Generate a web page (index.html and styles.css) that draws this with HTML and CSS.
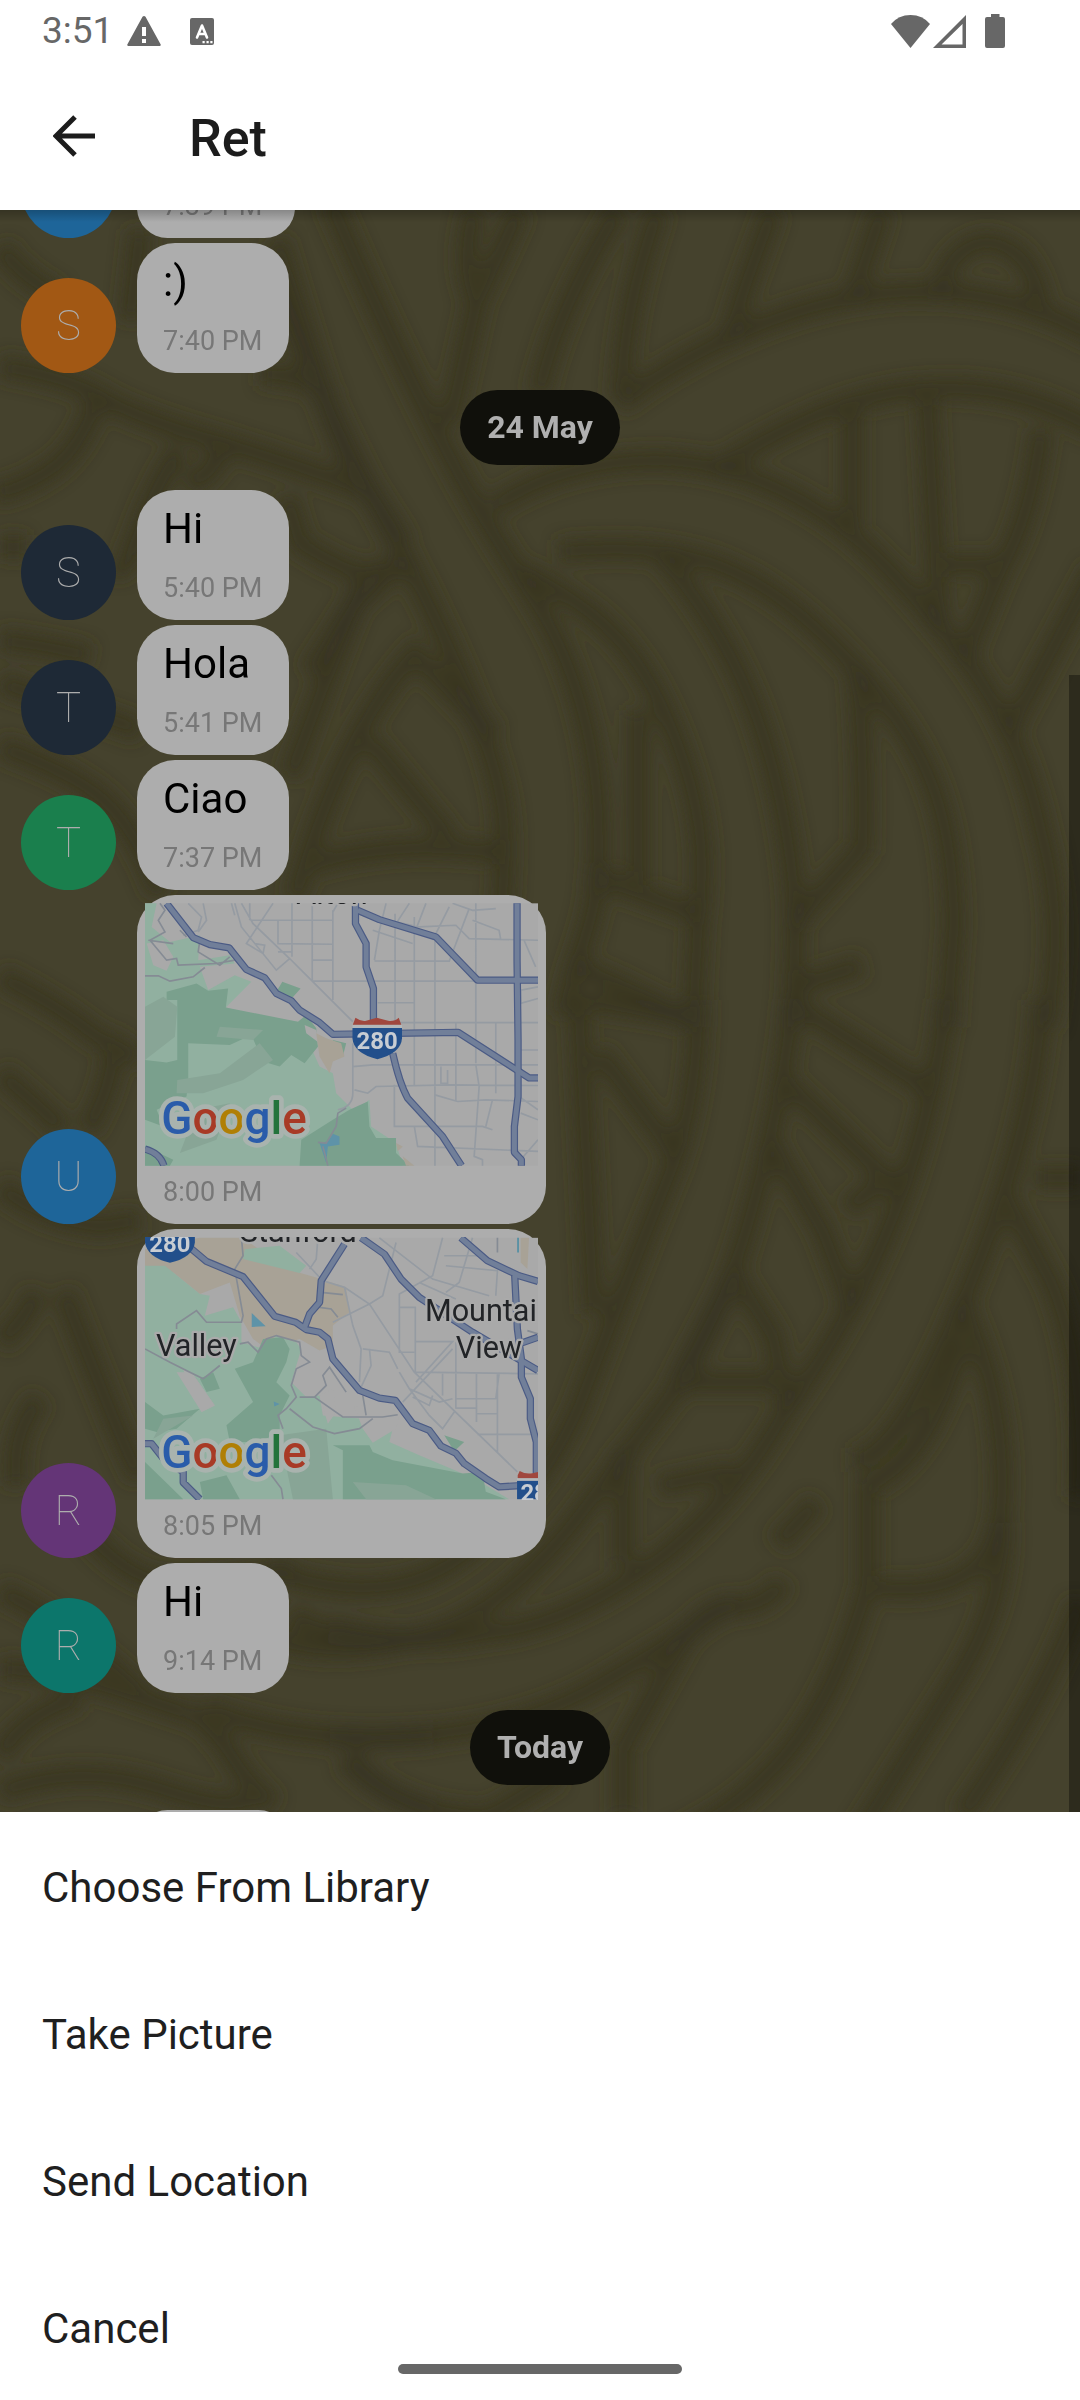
FILE: index.html
```html
<!DOCTYPE html>
<html lang="en">
<head>
<meta charset="utf-8">
<meta name="viewport" content="width=device-width, initial-scale=1">
<title>Ret</title>
<link rel="stylesheet" href="styles.css">
</head>
<body>
<div class="screen">
  <div class="status">
    <div class="status-group">
      <span class="clock">3:51</span>
      <svg class="icon-warn" viewBox="0 0 34 30" aria-hidden="true"><path d="M15.500.8Q17-.6 18.500.8L33.700 28.500Q34 30 32.500 30H1.500Q0 30 .3 28.500ZM15 11v9h4v-9ZM15 23v4h4v-4Z" fill-rule="evenodd"/></svg>
      <svg class="icon-lang" viewBox="0 0 24 27" aria-hidden="true"><rect width="24" height="27" rx="2"/><path d="M7 19.500 12 7.500l5 12M8.500 16h7" fill="none" stroke="#fff" stroke-width="2.600" stroke-linecap="round" stroke-linejoin="round"/><path d="M12.500 23h2.200v2.200h-2.200zM16.500 23h2.200v2.200h-2.200zM20.300 23h2.200v2.200h-2.200z" fill="#fff"/></svg>
    </div>
    <div class="status-group status-group--end">
      <svg class="icon-wifi" viewBox="0 0 39 33" aria-hidden="true"><path d="M0 9Q7.500 0 19.500 0T39 9L19.500 33Z"/></svg>
      <svg class="icon-signal" viewBox="0 0 33 33" aria-hidden="true"><path d="M33 0V33H0ZM29.500 9 8.500 29.500H29.500Z" fill-rule="evenodd"/></svg>
      <svg class="icon-battery" viewBox="0 0 20 34" aria-hidden="true"><path d="M6 0h8.500v3H18q2 0 2 2v27q0 2-2 2H2q-2 0-2-2V5q0-2 2-2h4Z"/></svg>
    </div>
  </div>
  <header class="appbar">
    <button class="back" type="button" aria-label="Back">
      <svg viewBox="0 0 42 42" aria-hidden="true"><path d="M42 21H4M22 2 3 21 22 40" fill="none" stroke="#1c1c1c" stroke-width="5"/></svg>
    </button>
    <h1>Ret</h1>
  </header>

  <main class="chat">
    <svg class="wallpaper" viewBox="0 0 1080 1602" preserveAspectRatio="xMidYMid slice" aria-hidden="true">
      <defs><filter id="soft" x="-5%" y="-5%" width="110%" height="110%"><feGaussianBlur stdDeviation="8"/></filter></defs>
      <g class="strands" filter="url(#soft)">
        <g transform="translate(300 -10) scale(.4975 .5102)">
          <path d="M60 0C160 230 230 370 310 520S470 770 510 850 600 1060 600 1250 560 1440 530 1600"/>
          <path d="M-60 150C20 330 90 480 150 590S290 840 350 1000 420 1200 405 1400"/>
          <path d="M350 20Q320 130 355 200L300 440M440 20Q400 110 355 200M640 20C540 180 500 290 480 380M720 20C670 160 650 260 645 390M950 20C910 130 880 200 865 275M1170 20Q1140 110 1110 195"/>
          <path d="M640 400C760 310 1000 180 1250 180Q1440 180 1600 270M840 525C980 440 1120 375 1270 370Q1440 360 1600 450"/>
          <path d="M390 600C500 530 620 510 720 510Q980 520 1180 720C1330 880 1440 1000 1490 1240Q1540 1420 1500 1620"/>
          <path d="M520 690C760 670 900 700 1080 880S1310 1180 1315 1420L1300 1620"/>
          <path d="M450 730C600 800 680 880 740 1020S820 1270 800 1420L790 1620"/>
          <path d="M730 700C860 850 930 1000 970 1200S990 1460 990 1620"/>
          <path d="M1285 190C1290 120 1350 70 1400 85S1470 130 1490 200"/>
          <path d="M1110 410V640M1260 380L1285 840M1490 450Q1470 620 1410 720L1335 900M1290 715H1410M1600 720L1425 1040"/>
          <path d="M1120 920Q1135 1100 1130 1270L990 1420M680 1000V1350L580 1320M600 1330L800 1400M550 1500Q680 1550 780 1610"/>
          <path d="M-20 1130L110 790 220 700M-10 1370Q80 1050 230 890L390 1050M140 1060L300 1250M0 1310Q180 1250 400 1280"/>
          <path d="M1000 1540L1130 1500"/>
        </g>
        <g transform="translate(300 790) scale(.4975 .523)">
          <path d="M800 0Q800 200 740 340T560 780Q480 950 330 1060T-60 1090"/>
          <path d="M990 0Q970 200 900 430T710 800L550 1000Q400 1180 230 1220T-60 1220"/>
          <path d="M1300 0Q1270 230 1190 420T980 780Q860 980 690 1090T380 1210Q230 1240 60 1200"/>
          <path d="M1490 0Q1480 240 1340 560T1110 880M1420 380L1510 540Q1580 700 1568 950"/>
          <path d="M1330 580Q1420 760 1410 960T1130 1120M1330 650Q1270 880 1140 930V1120Q1080 1330 970 1450T700 1620"/>
          <path d="M1410 1000Q1420 1150 1320 1300T1120 1600M1568 1150Q1500 1330 1330 1560"/>
          <path d="M560 0L590 600M600 100L750 290M770 30L560 0M980 160L1200 360M980 0L1260 170M950 280L1050 440 1110 590M870 520L950 640 980 780M760 730H980M870 530L760 730M1100 400L1180 340"/>
          <path d="M720 930L870 900M960 1040L1040 960M970 1110Q940 1160 870 1160T750 1260L650 1430V1560"/>
          <path d="M60 1410Q400 1420 600 1310T870 1150M90 1450Q200 1560 380 1560L520 1480M650 860V1080M1480 340H1568"/>
        </g>
        <g transform="scale(.3333)">
          <path d="M0 110Q60 200 180 260M420 60L390 330M0 470Q200 500 300 560T640 690 1120 850M780 490Q960 500 980 560M830 90Q880 260 960 520T1120 860L1210 1000"/>
          <path d="M290 570Q240 720 150 780T-20 850M540 720Q470 820 420 960T340 1060M660 720Q640 800 560 820M860 860L900 1000Q1060 1100 1110 1090L1060 1190 930 1390"/>
          <path d="M0 1010H80M0 1290Q160 1310 270 1340M0 1420Q200 1480 420 1560"/>
        </g>
        <g transform="translate(0 510) scale(.3333)">
          <path d="M0 80Q200 150 300 230T480 520M0 770Q160 850 250 920T420 1010M0 1060Q120 1160 190 1230M330 940Q360 1060 260 1230M0 1400Q120 1500 300 1520L420 1500"/>
        </g>
        <g transform="translate(0 1082) scale(.3333)">
          <path d="M0 150Q80 80 110 0M190 0Q260 180 320 330T420 560M120 320Q30 430 50 580M0 900Q160 960 420 1200M240 690Q320 800 420 850T880 830M0 1130Q200 1140 430 1220T580 1260Q660 1330 700 1400T820 1540M0 1390Q80 1260 240 1220M0 1500Q240 1410 480 1490T760 1510M620 1250Q900 1360 1300 1330M1050 1390Q1120 1500 1300 1560M870 970Q1050 1070 1240 1040"/>
        </g>
      </g>
    </svg>

    <div class="list">
      <div class="row row--cut-top">
        <span class="avatar blue"></span>
        <article class="bubble bubble--wide"><time>7:39 PM</time></article>
      </div>
      <div class="row">
        <span class="avatar orange">S</span>
        <article class="bubble"><p>:)</p><time>7:40 PM</time></article>
      </div>
      <h2 class="day">24 May</h2>
      <div class="row">
        <span class="avatar navy">S</span>
        <article class="bubble"><p>Hi</p><time>5:40 PM</time></article>
      </div>
      <div class="row">
        <span class="avatar navy">T</span>
        <article class="bubble"><p>Hola</p><time>5:41 PM</time></article>
      </div>
      <div class="row">
        <span class="avatar green">T</span>
        <article class="bubble"><p>Ciao</p><time>7:37 PM</time></article>
      </div>
      <div class="row">
        <span class="avatar blue">U</span>
        <article class="bubble bubble--map">
          <svg class="map" viewBox="75 69 1182 789" role="img" aria-label="Map of shared location">
            <rect x="75" y="69" width="1182" height="789" fill="#a9a9a9"/>
            <path class="park-light" d="M75 69H110L95 140 150 185 240 165 235 240 330 225 345 250 240 260 265 330 345 285 395 305 318 382 430 410 535 425 560 470 600 560 640 580 650 640 705 695 750 660 755 740 830 790 850 858H75Z"/>
            <path class="park" d="M140 335L230 310 265 332 325 325 318 382 535 425 560 405 590 445 595 500 555 550 515 525 480 560 430 545 395 465 330 495 205 490V600L200 650 110 690 130 740 75 720V540L140 548 172 540V360H140ZM488 305L543 325 510 362 470 335ZM545 780L640 720 690 690 745 665 750 740 770 775 830 775V820L870 858H540ZM640 480L680 490 670 530 640 510ZM75 800L160 840 150 858H75Z"/>
            <path class="park-mid" d="M172 600L300 580 420 490 460 540 370 600 250 640 170 640ZM300 440L430 450 400 480 290 470ZM75 380L130 350 172 380 165 470 75 540ZM230 690L330 670 290 780 180 820Z"/>
            <path fill="#a9a9a9" d="M80 190L130 180 160 230 140 272 100 255ZM555 435L590 450 600 490 560 460Z"/>
            <path class="sand" d="M590 460L620 475 665 490 675 530 640 545 630 580 600 530ZM830 790L850 800 835 815ZM850 830L885 858H860Z"/>
            <path fill="#5e93a8" d="M600 790L625 785 640 762 660 770V795L625 800 620 850 610 820Z"/>
            <g class="streets">
              <path d="M365 69L400 130 510 235 700 425M390 69V120M517 69V230M578 69V300M640 90V360M395 120H640M475 120V190L640 192M475 215H515M578 240H638M460 69L380 190 430 220 435 195 405 190M345 69L365 140 470 270 510 235M580 303H1257M655 69L640 95M765 240L780 150 800 69M827 100V430M765 242L990 243 1050 85M885 110V620M947 160V858M1070 69V550M1130 430V640M775 368H885M830 428H1257M700 490V640Q700 680 655 690M700 560L760 555H1257M705 630L745 640 770 620 990 615 1257 617M825 615V740H1090L1120 750M885 740L895 800 1257 815M1010 430V665M947 645L1015 665 1100 660 1257 665M1070 555L1080 620 1065 830 1090 840V858M1120 660L1100 740M965 560V610H985V570M760 150L880 190M870 69L830 130M920 69L885 160M990 80L940 180M765 110L900 140 1010 135 1050 175 1257 180M1000 69L1060 90 1130 85M1060 120L1140 150 1145 178M1215 180L1250 260M1257 320L1205 330V370L1257 355M1197 510H1257M1205 700L1257 720M1257 780L1205 840M1200 650L1257 690M335 69L345 105M250 69L260 120 235 155M205 69L245 110 235 150 190 165"/>
            </g>
            <path class="trails" d="M120 69L135 90 115 120 135 155 90 180 140 240 170 235 175 255 290 250 345 240M85 180L160 190M240 180L235 215 300 255 330 230M75 287H115L150 303 220 290 255 262M180 150L200 170M680 685L655 700 650 740 620 790 595 788M610 800L625 858"/>
            <g class="highway">
              <path d="M140 69L220 172 270 193 328 203 380 268 435 293 470 340 515 362 540 390 600 428 640 463 1017 457 1230 594H1257"/>
              <path d="M708 69V130L740 190V260L762 325V420M715 90L780 118 950 170 1075 300H1257M820 520Q840 610 865 655L970 770 1027 858M1194 69V240L1197 480V650L1186 740V818L1207 840V858M75 808Q120 820 132 858"/>
            </g>
            <g class="highway-fill">
              <path d="M140 69L220 172 270 193 328 203 380 268 435 293 470 340 515 362 540 390 600 428 640 463 1017 457 1230 594H1257"/>
              <path d="M708 69V130L740 190V260L762 325V420M715 90L780 118 950 170 1075 300H1257M820 520Q840 610 865 655L970 770 1027 858M1194 69V240L1197 480V650L1186 740V818L1207 840V858M75 808Q120 820 132 858"/>
            </g>
            <text class="place" x="530" y="72">Alton</text>
            <path fill="#b4b8ba" d="M699 434H848V446H699Z"/>
            <path fill="#a0473e" d="M700 434L708 413Q725 425 740 422L772 413 806 422Q825 425 838 413L846 434Z"/>
            <path fill="#224f8b" d="M699 444H848V475Q845 520 774 538 702 520 699 475Z"/>
            <text class="shield" x="773" y="507">280</text>
            <text class="logo" x="124" y="764"><tspan class="g-blue">G</tspan><tspan class="g-red">o</tspan><tspan class="g-yellow">o</tspan><tspan class="g-blue">g</tspan><tspan class="g-green">l</tspan><tspan class="g-red">e</tspan></text>
          </svg>
          <time>8:00 PM</time>
        </article>
      </div>
      <div class="row">
        <span class="avatar purple">R</span>
        <article class="bubble bubble--map">
          <svg class="map" viewBox="75 66 1182 786" role="img" aria-label="Map of shared location">
            <rect x="75" y="66" width="1182" height="786" fill="#a9a9a9"/>
            <path class="sand" d="M75 100L240 66H370L500 160 590 185 680 215 690 290 640 330 640 390 600 405 540 370 440 400 400 370 360 300 330 200 240 235 160 170 75 150ZM1205 66H1230L1225 160 1205 140Z"/>
            <path class="park-light" d="M75 150L135 150 240 235 270 240 255 300 340 275 365 320 365 380 430 400 470 360 530 380 545 400 515 500 560 545 600 540 610 600 730 610 760 580 830 600 810 680 900 720 1030 775 1100 810 1170 852H75V330L170 320 180 440 245 590 285 570 215 470 160 450 120 410 75 430Z"/>
            <path class="park-light" d="M375 100L480 90 560 150 540 172 370 130Z"/>
            <path class="park" d="M240 490L280 470 300 520 260 530ZM345 460L400 440 430 370 490 365 510 400 500 440 470 500 510 540 480 600 480 650 420 680 330 680 320 630 400 560ZM640 690H750L760 710 820 735 1030 775 1090 770 1100 830 1160 852H670V705ZM75 560L130 600 240 580 170 640 110 650 75 640ZM75 740L190 852H75ZM975 660L1035 680 1005 708ZM240 800L320 780 360 852H250Z"/>
            <path class="park-mid" d="M480 660L620 640 640 852H520ZM130 610L220 600 100 670ZM700 800L860 810 950 852H740Z"/>
            <path fill="#a9a9a9" d="M170 470L215 470 285 570 245 590ZM600 540L640 520 650 590 625 625ZM705 575L800 560 840 600 830 640 760 682 730 640Z"/>
            <path fill="#5e93a8" d="M396 292L438 332 396 334ZM462 558L480 566 464 573Z"/>
            <g class="streets">
              <path d="M595 66L590 130 570 160M530 110L610 195 675 215 750 265 885 470 1195 770M675 215L700 330 725 400 720 500M750 265L640 320M780 66L940 190 1110 240M830 80L790 240 750 265M970 66L940 180 840 235V410H885M840 275H888V470L1257 475M730 400L810 410 835 460M750 400L755 450 725 515M890 378H1000L890 500M970 475V540M1010 380V580M1072 475V620M1135 475V710M1010 550H1130L1140 475M1010 578H1070M1072 595H1135M1075 657H1257M1060 66L1020 200 980 230M975 120H1100M980 150L1135 165 1130 240M850 560L1000 400M870 520L930 600 970 640 1005 590M840 470L870 520 960 560 1000 550M880 545L930 570 940 540M900 200L1010 250"/>
            </g>
            <path class="trails" d="M365 66L370 120 345 160 370 300 365 320 260 320 230 285 170 325V340M75 400L150 440 210 470 250 490 300 450M360 385L385 380 415 410 440 370 470 360 540 380 545 420 570 440 530 460 515 510 530 545 500 580 475 600 490 640M540 545H585L620 510 610 480 630 455 680 530M585 545L670 605 790 605 835 598M510 580L580 635 645 655 720 640 760 610M730 540L740 600M600 275L635 280 655 305M605 230L670 237M455 780L485 820 490 852M1225 345L1257 355M1135 66V110"/>
            <g class="highway">
              <path d="M210 95L260 137 370 183 465 302 528 320 560 342 600 350 625 370 640 430 720 525 780 548 828 555 880 625 930 645 965 692 1010 714 1035 745 1100 790 1140 815 1257 808M725 66L795 115 845 190 900 245 1060 350 1257 465M1025 66L1105 135 1200 180 1257 197M1187 180L1195 340 1207 430V485L1234 550V610L1252 680V780M1200 385L1257 365M75 685H95L130 730 190 770V802L240 852"/>
              <path d="M675 85L605 195 600 260 570 295 555 335"/>
            </g>
            <g class="highway-fill">
              <path d="M210 95L260 137 370 183 465 302 528 320 560 342 600 350 625 370 640 430 720 525 780 548 828 555 880 625 930 645 965 692 1010 714 1035 745 1100 790 1140 815 1257 808M725 66L795 115 845 190 900 245 1060 350 1257 465M1025 66L1105 135 1200 180 1257 197M1187 180L1195 340 1207 430V485L1234 550V610L1252 680V780M1200 385L1257 365M75 685H95L130 730 190 770V802L240 852"/>
              <path d="M675 85L605 195 600 260 570 295 555 335"/>
            </g>
            <path d="M1197 66V110" stroke="#4f8ea3" stroke-width="5"/>
            <path fill="#224f8b" d="M75 48H225V80Q220 125 150 141 82 125 75 80Z"/>
            <text class="shield" x="150" y="108">280</text>
            <path fill="#a0473e" d="M1196 790V780L1202 767Q1220 778 1240 774L1257 770V790Z"/>
            <path fill="#b4b8ba" d="M1194 789H1257V797H1194Z"/>
            <path fill="#224f8b" d="M1194 797H1257V852H1194Z"/>
            <text class="shield" x="1266" y="858">280</text>
            <text class="place" x="360" y="80">Stanford</text>
            <text class="place" x="108" y="422">Valley</text>
            <text class="place" x="917" y="316">Mountai</text>
            <text class="place" x="1010" y="426">View</text>
            <text class="logo" x="124" y="758"><tspan class="g-blue">G</tspan><tspan class="g-red">o</tspan><tspan class="g-yellow">o</tspan><tspan class="g-blue">g</tspan><tspan class="g-green">l</tspan><tspan class="g-red">e</tspan></text>
          </svg>
          <time>8:05 PM</time>
        </article>
      </div>
      <div class="row">
        <span class="avatar teal">R</span>
        <article class="bubble"><p>Hi</p><time>9:14 PM</time></article>
      </div>
      <h2 class="day">Today</h2>
      <div class="row row--cut-bottom">
        <article class="bubble"></article>
      </div>
    </div>
    <div class="scrollbar"></div>
  </main>

  <nav class="sheet" aria-label="Attach">
    <button type="button">Choose From Library</button>
    <button type="button">Take Picture</button>
    <button type="button">Send Location</button>
    <button type="button">Cancel</button>
    <span class="home-bar"></span>
  </nav>
</div>
</body>
</html>
```
FILE: styles.css
```css
* { box-sizing: border-box; }

body {
  margin: 0;
  background: #fff;
  font-family: Roboto, "Liberation Sans", sans-serif;
  color: #1f1f1f;
}

h1, h2, p { margin: 0; }
button { border: 0; background: none; padding: 0; font: inherit; color: inherit; text-align: left; }

.screen { min-height: 100vh; display: flex; flex-direction: column; }

/* Status bar */
.status {
  height: 62px;
  padding: 0 75px 0 42px;
  display: flex;
  align-items: center;
  justify-content: space-between;
  color: #676767;
}
.status svg { fill: #676767; display: block; }
.status-group { display: flex; align-items: center; }
.status-group--end { gap: 3px; }
.clock { font-size: 37px; line-height: 42px; width: 85px; }
.icon-warn { width: 34px; height: 30px; }
.icon-lang { width: 24px; height: 27px; margin-left: 29px; }
.icon-wifi { width: 39px; height: 33px; }
.icon-signal { width: 33px; height: 33px; }
.icon-battery { width: 20px; height: 34px; margin-left: 16px; }

/* App bar */
.appbar { height: 148px; padding: 0 48px; display: flex; align-items: center; }
.back { width: 141px; height: 56px; padding-left: 5px; display: flex; align-items: center; }
.back svg { width: 42px; height: 42px; }
.appbar h1 { padding-top: 6px; font-size: 52px; line-height: 60px; font-weight: 500; color: #1c1c1c; }

/* Conversation */
.chat { position: relative; flex: 1 0 auto; overflow: hidden; background: #45422d; }
.wallpaper { position: absolute; inset: 0; width: 100%; height: 100%; }
.strands path { fill: none; stroke: #393522; stroke-opacity: .85; stroke-width: 24px; vector-effect: non-scaling-stroke; }
.chat::after {
  content: "";
  position: absolute;
  inset: 0 0 auto;
  height: 12px;
  background: linear-gradient(rgba(0, 0, 0, .22), transparent);
}
.scrollbar { position: absolute; right: 0; top: 465px; bottom: 0; width: 11px; background: rgba(0, 0, 0, .35); }

.list { position: relative; display: flex; flex-direction: column; gap: 5px; padding-left: 21px; padding-right: 21px; }
.row { display: flex; align-items: flex-end; gap: 21px; }
.row--cut-top { height: 28px; }
.row--cut-bottom { height: 2px; align-items: flex-start; padding-left: 116px; }

.avatar {
  flex: none;
  width: 95px;
  height: 95px;
  border-radius: 50%;
  display: grid;
  place-items: center;
  font-size: 42px;
  line-height: 50px;
  font-weight: 100;
  color: #adadad;
}
.orange { background: #a25814; }
.blue { background: #1e6599; }
.navy { background: #1e2936; }
.green { background: #1a7f4d; }
.purple { background: #643577; }
.teal { background: #0c766b; }

.bubble {
  min-width: 152px;
  min-height: 61px;
  padding: 14px 26px 17px;
  border-radius: 38px;
  background: #adadad;
}
.bubble p { font-size: 42px; line-height: 50px; color: #000; }
.bubble time { display: block; font-size: 27px; line-height: 30px; color: #777; }
.bubble p + time { margin-top: 19px; }
.bubble--wide { min-width: 158px; }
.bubble--map { width: 409px; padding: 8px 8px 17px; }
.bubble--map time { margin-top: 11px; padding-left: 18px; }

.day {
  align-self: center;
  margin: 12px 0 20px;
  padding: 18px 27px 19px;
  border-radius: 38px;
  background: #10100b;
  color: #b0b0b0;
  font-size: 32px;
  line-height: 38px;
  font-weight: 700;
}

/* Map previews */
.map { display: block; width: 100%; height: 263px; }
.park { fill: #7aa08d; }
.park-light { fill: #91b0a0; }
.park-mid { fill: #88a596; }
.sand { fill: #a8a296; }
.streets path { fill: none; stroke: #959ba2; stroke-width: 5px; }
.trails { fill: none; stroke: #858b94; stroke-width: 5px; }
.highway path { fill: none; stroke: #4b5b85; stroke-width: 22px; stroke-linejoin: round; }
.highway-fill path { fill: none; stroke: #717f99; stroke-width: 15px; stroke-linejoin: round; }
.shield { font-size: 72px; font-weight: 700; fill: #c8cdd3; text-anchor: middle; }
.place { font-size: 92px; fill: #222427; stroke: #aaa; stroke-width: 14px; paint-order: stroke; stroke-linejoin: round; }
.logo { font-size: 138px; font-weight: 500; stroke: #a9b3ae; stroke-width: 28px; paint-order: stroke; stroke-linejoin: round; }
.g-blue { fill: #2a5caa; }
.g-red { fill: #a83a26; }
.g-yellow { fill: #b07f05; }
.g-green { fill: #23733b; }

/* Action sheet */
.sheet { position: relative; display: flex; flex-direction: column; background: #fff; }
.sheet button { padding: 51px 42px 47px; font-size: 42px; line-height: 49px; }
.home-bar {
  position: absolute;
  left: 50%;
  bottom: 26px;
  width: 284px;
  height: 10px;
  margin-left: -142px;
  border-radius: 5px;
  background: #676767;
}
```
